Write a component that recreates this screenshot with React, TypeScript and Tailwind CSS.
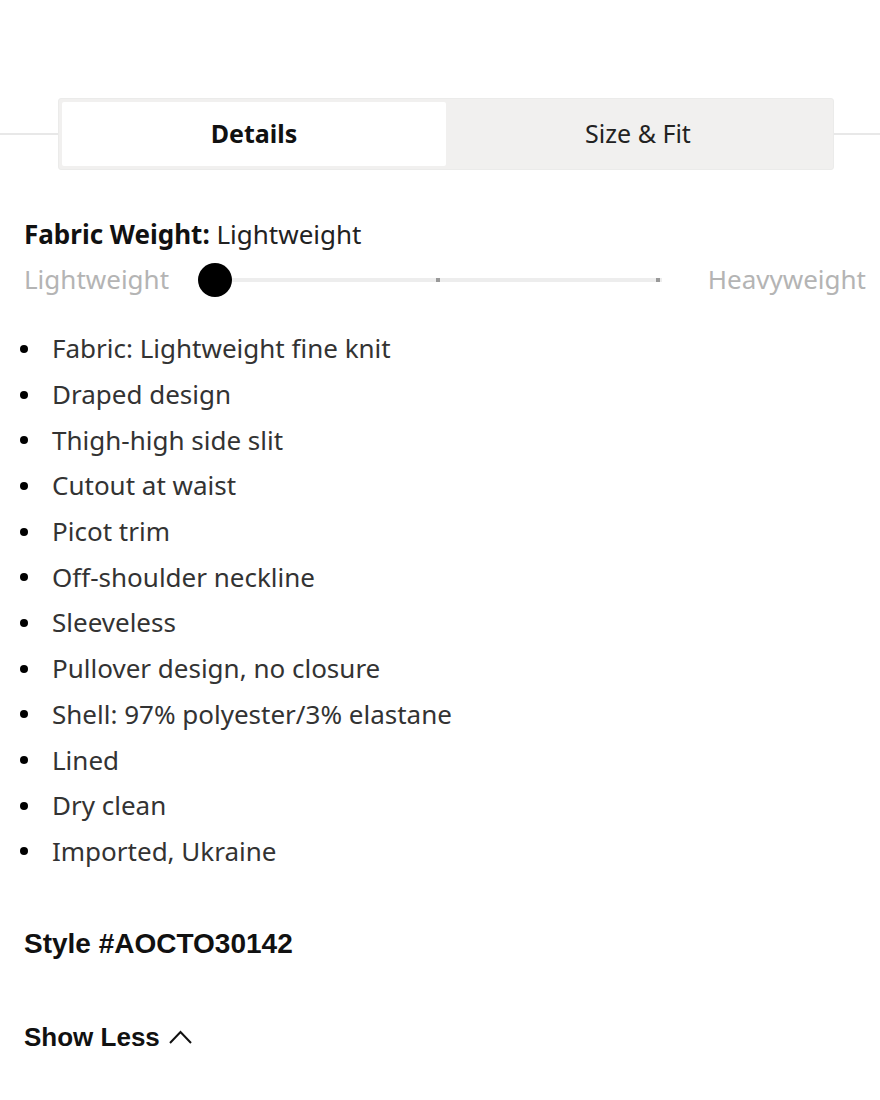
const features = [
  'Fabric: Lightweight fine knit',
  'Draped design',
  'Thigh-high side slit',
  'Cutout at waist',
  'Picot trim',
  'Off-shoulder neckline',
  'Sleeveless',
  'Pullover design, no closure',
  'Shell: 97% polyester/3% elastane',
  'Lined',
  'Dry clean',
  'Imported, Ukraine',
]

function Tabs() {
  return (
    <div className="flex items-center">
      <div className="h-[2px] w-[58px] bg-[#e8e8e8]" />
      <div className="flex h-[72px] w-[776px] rounded-[3px] border border-[#ebebea] bg-[#f1f0ef] p-[3px]">
        <button className="flex-1 rounded-[2px] bg-white text-[25px] font-bold text-[#111]">Details</button>
        <button className="flex-1 text-[25px] text-[#222]">Size &amp; Fit</button>
      </div>
      <div className="h-[2px] flex-1 bg-[#e8e8e8]" />
    </div>
  )
}

function WeightScale() {
  return (
    <div className="pl-6 pr-[14px] pt-[48px]">
      <div className="text-[26px] leading-[32px] text-[#222]">
        <span className="font-bold text-[#111]">Fabric Weight:</span> Lightweight
      </div>
      <div className="mt-[10px] flex items-center text-[26px] text-[#b4b4b4]">
        <span>Lightweight</span>
        <div className="relative ml-[29px] mr-[46px] flex h-[34px] flex-1 items-center">
          <div className="h-[4px] w-full bg-[#ededed]" />
          <span className="absolute left-0 top-0 h-[34px] w-[34px] rounded-full bg-black" />
          <span className="absolute left-[238px] top-[15px] h-[4px] w-[4px] bg-[#999]" />
          <span className="absolute right-[2px] top-[15px] h-[4px] w-[4px] bg-[#999]" />
        </div>
        <span>Heavyweight</span>
      </div>
    </div>
  )
}

export default function App() {
  return (
    <div className="min-h-[1100px] bg-white pt-[98px] font-['Noto_Sans',sans-serif]">
      <Tabs />
      <WeightScale />

      <ul className="mt-[27px] pl-[20px]">
        {features.map((f) => (
          <li key={f} className="flex h-[45.7px] items-center text-[26px] text-[#333]">
            <span className="mr-[24px] h-[8px] w-[8px] rounded-full bg-black" />
            {f}
          </li>
        ))}
      </ul>

      <div className="mt-[53px] px-6 font-['Liberation_Sans',sans-serif] text-[28px] font-bold leading-[34px] text-[#111]">
        Style #AOCTO30142
      </div>

      <button className="mt-[59px] flex items-center gap-[9px] px-6 font-['Liberation_Sans',sans-serif] text-[26px] font-bold leading-[34px] text-[#111]">
        Show Less
        <svg width="23" height="14" viewBox="0 0 23 14" fill="none" stroke="#111" strokeWidth="2">
          <polyline points="1,13 11.5,2 22,13" />
        </svg>
      </button>
    </div>
  )
}
